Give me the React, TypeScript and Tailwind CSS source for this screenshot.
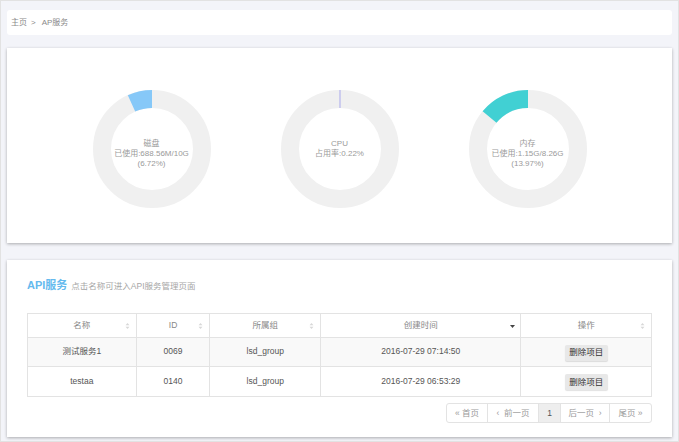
import React from "react";

const font = { fontFamily: '"Liberation Sans", Arial, "Noto Sans CJK SC", sans-serif' };

function arcPath(frac: number, cx: number, cy: number, r: number) {
  const a = frac * 2 * Math.PI;
  const x = cx - r * Math.sin(a);
  const y = cy - r * Math.cos(a);
  const large = frac > 0.5 ? 1 : 0;
  return `M ${cx} ${cy - r} A ${r} ${r} 0 ${large} 0 ${x} ${y}`;
}

function Donut({ frac, color, lines }: { frac: number; color: string; lines: string[] }) {
  return (
    <div className="relative w-[118px] h-[118px]">
      <svg width="118" height="118" viewBox="0 0 118 118" className="absolute inset-0">
        <circle cx="59" cy="59" r="50" fill="none" stroke="#f0f0f0" strokeWidth="18" />
        {frac < 0.01 ? (
          <line x1="59" y1="0" x2="59" y2="18" stroke={color} strokeWidth="1" />
        ) : (
          <path d={arcPath(frac, 59, 59, 50)} fill="none" stroke={color} strokeWidth={18} />
        )}
      </svg>
      <div className="absolute left-0 right-0 top-[49px] flex flex-col items-center text-[8px] leading-[10px] text-[#9a9a9a] text-center">
        {lines.map((l) => (
          <div key={l}>{l}</div>
        ))}
      </div>
    </div>
  );
}

function SortIcon({ active }: { active?: boolean }) {
  if (active) {
    return (
      <svg width="5" height="3" viewBox="0 0 5 3" className="absolute right-[5px] top-[11px]">
        <path d="M0 0 L5 0 L2.5 3 Z" fill="#444" />
      </svg>
    );
  }
  return (
    <svg width="5" height="8" viewBox="0 0 5 8" className="absolute right-[6px] top-[8px]">
      <path d="M0.5 3.2 L2.5 1 L4.5 3.2 Z" fill="#d8d8d8" />
      <path d="M0.5 4.8 L2.5 7 L4.5 4.8 Z" fill="#d8d8d8" />
    </svg>
  );
}

const cols = [
  { name: "名称", w: "w-[109px]" },
  { name: "ID", w: "w-[74px]" },
  { name: "所属组", w: "w-[111px]" },
  { name: "创建时间", w: "w-[201px]", active: true },
  { name: "操作", w: "w-[130px]" },
];

const rows = [
  ["测试服务1", "0069", "lsd_group", "2016-07-29 07:14:50"],
  ["testaa", "0140", "lsd_group", "2016-07-29 06:53:29"],
];

export default function App() {
  return (
    <div style={font} className="w-[679px] h-[442px] bg-[#f3f4f9] border border-[#e2e2e2] px-[6px] pt-[9px] overflow-hidden">
      <div className="h-[25px] bg-white rounded-[3px] flex items-center pl-[4px] text-[8px] text-[#8a8a8a]">
        <span>主页</span>
        <span className="ml-[4px] mr-[6px]">&gt;</span>
        <span>AP服务</span>
      </div>

      <div className="mt-[13px] h-[195px] bg-white shadow-[0_1px_3px_rgba(0,0,0,0.3)] flex justify-center pt-[42px]">
        <div className="w-[188px] flex justify-center">
          <Donut frac={0.0672} color="#86c8f8" lines={["磁盘", "已使用:688.56M/10G", "(6.72%)"]} />
        </div>
        <div className="w-[188px] flex justify-center">
          <Donut frac={0.0022} color="#a9a9ec" lines={["CPU", "占用率:0.22%"]} />
        </div>
        <div className="w-[188px] flex justify-center">
          <Donut frac={0.1397} color="#41d0d3" lines={["内存", "已使用:1.15G/8.26G", "(13.97%)"]} />
        </div>
      </div>

      <div className="mt-[17px] h-[177px] bg-white shadow-[0_1px_3px_rgba(0,0,0,0.3)] px-[20px] pt-[17px]">
        <div className="flex items-baseline h-[16px]">
          <span className="text-[11px] font-bold text-[#65baee]">API服务</span>
          <span className="ml-[4px] text-[8.5px] text-[#a6a6a6]">点击名称可进入API服务管理页面</span>
        </div>

        <div className="mt-[20px] border border-[#e3e3e3] w-[625px]">
          <div className="flex h-[24px] border-b border-[#e3e3e3]">
            {cols.map((c, i) => (
              <div
                key={c.name}
                className={`${c.w} relative flex items-center justify-center text-[8.5px] text-[#888] ${i < cols.length - 1 ? "border-r border-[#e3e3e3]" : ""}`}
              >
                {c.name}
                <SortIcon active={c.active} />
              </div>
            ))}
          </div>
          {rows.map((r, ri) => (
            <div
              key={ri}
              className={`flex h-[29px] ${ri === 0 ? "bg-[#f9f9f9] border-b border-[#e3e3e3]" : "bg-white"}`}
            >
              {r.map((v, i) => (
                <div
                  key={i}
                  className={`${cols[i].w} flex items-center justify-center text-[8.5px] text-[#555] border-r border-[#e3e3e3] pb-[1px]`}
                >
                  {v}
                </div>
              ))}
              <div className="w-[130px] flex items-center justify-center">
                <button className="h-[16px] w-[43px] mt-[1px] rounded-[2px] bg-[#e8e8e8] shadow-[0_1px_1px_rgba(0,0,0,0.12)] text-[8.5px] text-[#333] flex items-center justify-center">
                  删除项目
                </button>
              </div>
            </div>
          ))}
        </div>

        <div className="mt-[6px] w-[625px] flex justify-end">
          <div className="flex h-[20px] border border-[#e3e3e3] rounded-[3px] text-[8.5px] text-[#9a9a9a] overflow-hidden">
            <div className="w-[41px] flex items-center justify-center border-r border-[#e3e3e3]">« 首页</div>
            <div className="w-[51px] flex items-center justify-center border-r border-[#e3e3e3]">‹ &nbsp;前一页</div>
            <div className="w-[22px] flex items-center justify-center border-r border-[#e3e3e3] bg-[#eeeeee] text-[#555]">1</div>
            <div className="w-[49px] flex items-center justify-center border-r border-[#e3e3e3]">后一页 &nbsp;›</div>
            <div className="w-[41px] flex items-center justify-center">尾页 »</div>
          </div>
        </div>
      </div>
    </div>
  );
}
